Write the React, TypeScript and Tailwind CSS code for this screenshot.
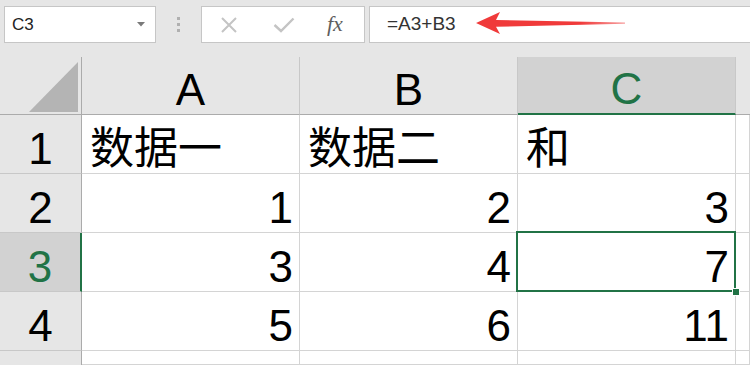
const CELL_FONT = "font-['Liberation_Sans','Noto_Sans_CJK_SC',sans-serif]";

function Cell({
  children,
  align = "right",
  className = "",
}: {
  children?: React.ReactNode;
  align?: "left" | "right";
  className?: string;
}) {
  return (
    <div
      className={`relative flex items-end bg-white border-r border-b border-[#d4d4d4] pb-[2px] ${
        align === "right" ? "justify-end pr-[6px]" : "justify-start pl-[8px]"
      } ${className}`}
    >
      <span className="leading-none text-[44px] text-black">{children}</span>
    </div>
  );
}

function RowHead({ n, active = false }: { n: number; active?: boolean }) {
  return (
    <div
      className={`flex items-end justify-center pb-[2px] border-b border-[#c8c8c8] ${
        active
          ? "bg-[#d2d2d2] text-[#217346] border-r-2 border-r-[#217346]"
          : "bg-[#e6e6e6] text-black border-r border-r-[#ababab]"
      }`}
    >
      <span className="leading-none text-[44px]">{n}</span>
    </div>
  );
}

function ColHead({ label, active = false }: { label: string; active?: boolean }) {
  return (
    <div
      className={`flex items-end justify-center pb-[2px] border-r border-[#c8c8c8] ${
        active
          ? "bg-[#d2d2d2] text-[#217346] border-b-2 border-b-[#217346]"
          : "bg-[#e6e6e6] text-black border-b border-b-[#ababab]"
      }`}
    >
      <span className="leading-none text-[44px]">{label}</span>
    </div>
  );
}

export default function App() {
  return (
    <div className="w-[750px] h-[365px] overflow-hidden bg-[#e6e6e6]">
      {/* formula bar */}
      <div className="h-[57px] flex items-start pt-[6px] font-['Liberation_Sans',sans-serif]">
        <div className="ml-[4px] w-[152px] h-[37px] bg-white border border-[#c6c6c6] flex items-center justify-between pl-[7px] pr-[10px]">
          <span className="text-[17px] text-[#222]">C3</span>
          <svg width="8" height="5" viewBox="0 0 8 5">
            <polygon points="0,0 8,0 4,4.5" fill="#7a7a7a" />
          </svg>
        </div>
        <div className="w-[45px] h-[37px] flex flex-col items-center justify-center gap-[3px]">
          <div className="w-[3px] h-[3px] bg-[#b0b0b0]" />
          <div className="w-[3px] h-[3px] bg-[#b0b0b0]" />
          <div className="w-[3px] h-[3px] bg-[#b0b0b0]" />
        </div>
        <div className="w-[164px] h-[37px] bg-white border border-[#c6c6c6] flex items-center pl-[18px]">
          <svg width="18" height="16" viewBox="0 0 18 16">
            <path d="M2 1 L16 15 M16 1 L2 15" stroke="#c4c4c4" strokeWidth="2" fill="none" />
          </svg>
          <svg width="22" height="16" viewBox="0 0 22 16" className="ml-[35px]">
            <path d="M1.5 8 L8 14 L20.5 1.5" stroke="#c4c4c4" strokeWidth="2.4" fill="none" />
          </svg>
          <span className="ml-[32px] text-[22px] italic font-['Liberation_Serif',serif] text-[#5e5e5e] leading-none -mt-[2px]">
            fx
          </span>
        </div>
        <div className="relative ml-[4px] flex-1 h-[37px] bg-white border-y border-l border-[#c6c6c6] flex items-center pl-[17px]">
          <span className="text-[19px] text-[#333]">=A3+B3</span>
          <svg
            className="absolute left-[105px] top-[3px]"
            width="152"
            height="26"
            viewBox="0 0 152 26"
          >
            <defs>
              <linearGradient id="fade" x1="0" x2="1" y1="0" y2="0">
                <stop offset="0.7" stopColor="#f03a3a" />
                <stop offset="1" stopColor="#f7a0a0" />
              </linearGradient>
            </defs>
            <polygon
              points="1,13 25,2 21,10 150,12.5 150,13.8 21,16.8 25,24"
              fill="url(#fade)"
            />
          </svg>
        </div>
      </div>

      {/* sheet */}
      <div
        className={`grid grid-cols-[82px_218px_218px_218px_1fr] grid-rows-[58px_59px_59px_59px_59px_1fr] h-[308px] ${CELL_FONT}`}
      >
        <div className="relative bg-[#e6e6e6] border-r border-r-[#ababab] border-b border-b-[#ababab]">
          <svg className="absolute right-[3px] bottom-[2px]" width="49" height="50" viewBox="0 0 49 50">
            <polygon points="49,0 49,50 0,50" fill="#b4b4b4" />
          </svg>
        </div>
        <ColHead label="A" />
        <ColHead label="B" />
        <ColHead label="C" active />
        <div className="bg-[#e6e6e6] border-b border-b-[#ababab]" />

        <RowHead n={1} />
        <Cell align="left">数据一</Cell>
        <Cell align="left">数据二</Cell>
        <Cell align="left">和</Cell>
        <Cell />

        <RowHead n={2} />
        <Cell>1</Cell>
        <Cell>2</Cell>
        <Cell>3</Cell>
        <Cell />

        <RowHead n={3} active />
        <Cell>3</Cell>
        <Cell>4</Cell>
        <Cell className="z-10">
          7
          <span className="absolute left-[-2px] top-[-2px] w-[220px] h-[61px] border-2 border-[#217346]" />
          <span className="absolute right-[-5px] bottom-[-5px] w-[8px] h-[8px] bg-[#217346] border border-white" />
        </Cell>
        <Cell />

        <RowHead n={4} />
        <Cell>5</Cell>
        <Cell>6</Cell>
        <Cell>11</Cell>
        <Cell />

        <div className="bg-[#e6e6e6] border-r border-r-[#ababab]" />
        <Cell />
        <Cell />
        <Cell />
        <Cell />
      </div>
    </div>
  );
}
